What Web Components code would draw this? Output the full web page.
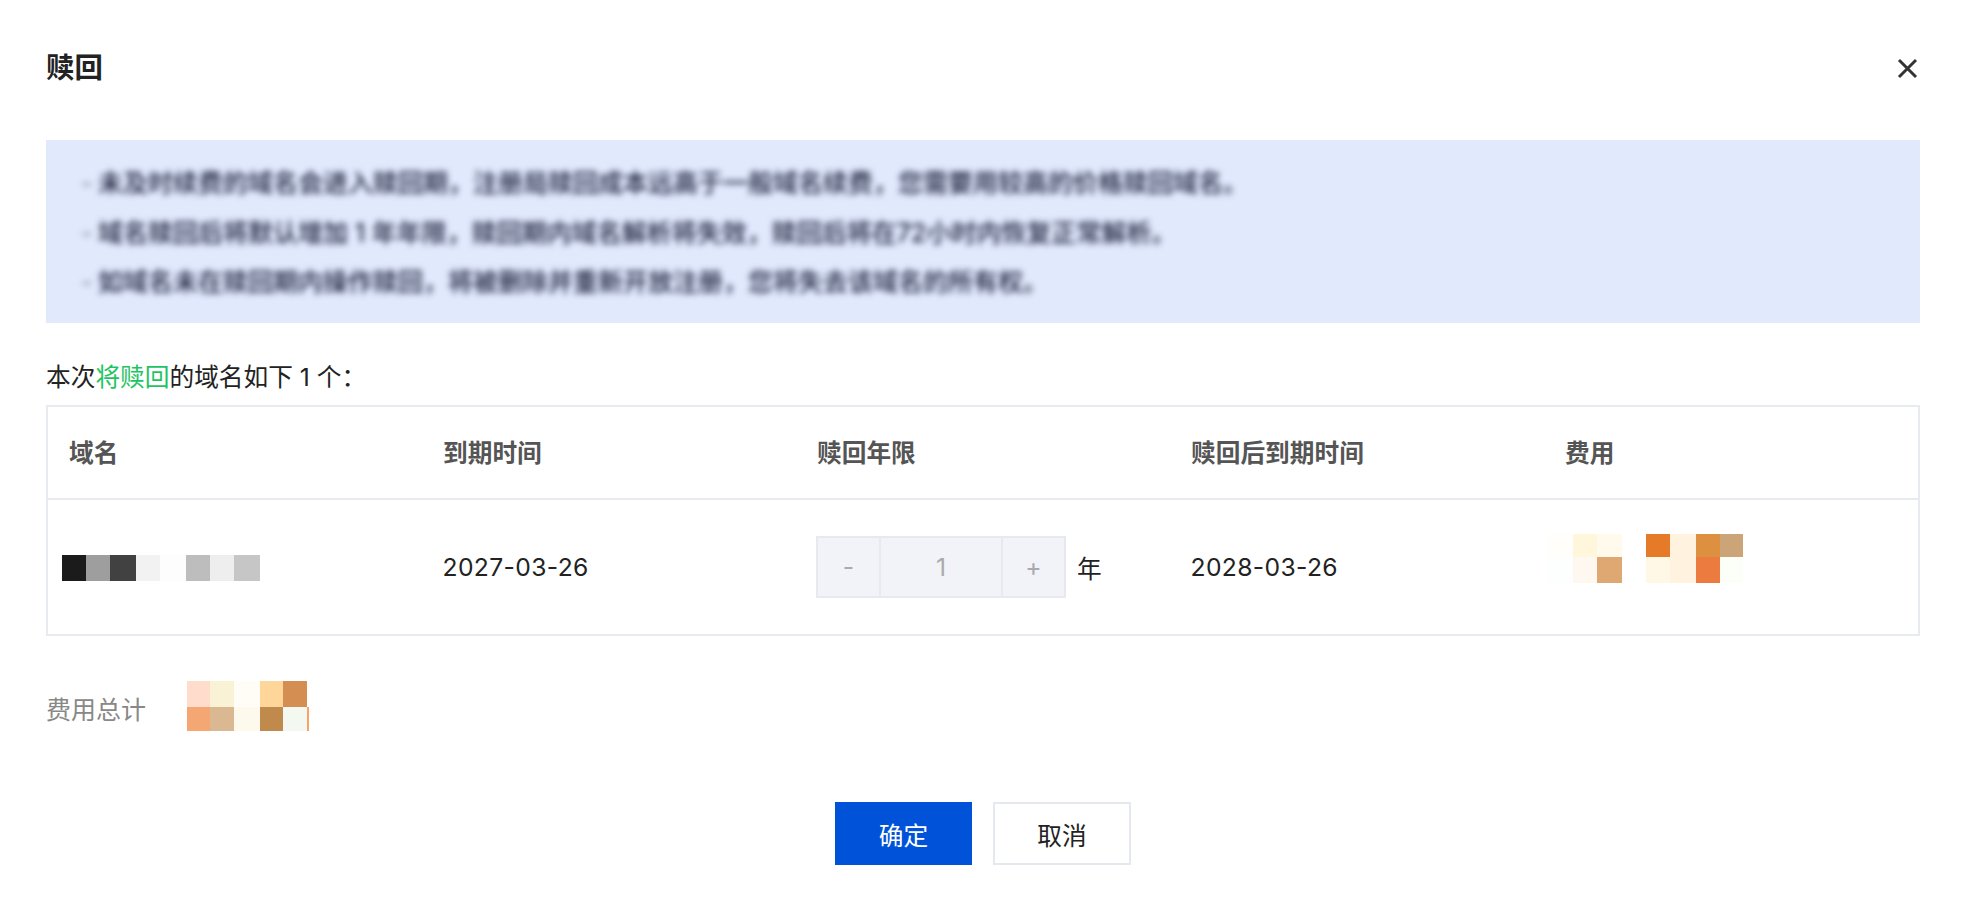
<!DOCTYPE html>
<html lang="zh-CN">
<head>
<meta charset="utf-8">
<title>赎回</title>
<style>
  html, body { margin: 0; background: #fff; }
  body {
    font-family: "Inter", "Noto Sans CJK SC", sans-serif;
    font-size: 24.7px;
    color: #222;
  }
  .green { color: #1fc462; }
  .date { letter-spacing: 0.35px; }
  .colon { font-family: "Noto Sans CJK TC", sans-serif; }
</style>
</head>
<body>
<redeem-dialog heading="赎回">
  <notice-box>
    <li>未及时续费的域名会进入赎回期&#xFF0C;注册局赎回成本远高于一般域名续费&#xFF0C;您需要用较高的价格赎回域名&#x3002;</li>
    <li>域名赎回后将默认增加 1 年年限&#xFF0C;赎回期内域名解析将失效&#xFF0C;赎回后将在72小时内恢复正常解析&#x3002;</li>
    <li>如域名未在赎回期内操作赎回&#xFF0C;将被删除并重新开放注册&#xFF0C;您将失去该域名的所有权&#x3002;</li>
  </notice-box>
  <intro-line>本次<span class="green">将赎回</span>的域名如下 1 个<span class="colon">&#xFF1A;</span></intro-line>
  <domain-table>
    <table-cell head>域名</table-cell>
    <table-cell head>到期时间</table-cell>
    <table-cell head>赎回年限</table-cell>
    <table-cell head>赎回后到期时间</table-cell>
    <table-cell head>费用</table-cell>
    <table-cell kind="name"><pixel-block cols="24,24,26,24,26,24,24,26" rows="26"
      colors="#1b1b1b #9e9e9e #414141 #f2f2f2 #fdfdfd #bdbdbd #eeeeee #c6c6c6"></pixel-block></table-cell>
    <table-cell><span class="date">2027-03-26</span></table-cell>
    <table-cell kind="stepper"><year-stepper value="1"></year-stepper></table-cell>
    <table-cell><span class="date">2028-03-26</span></table-cell>
    <table-cell kind="fee"><pixel-block cols="26,24,25,24,24,26,24,23" rows="23,26"
      colors="#fffefb #fff6dc #fffaeb #ffffff #e57b28 #fff3df #dd9040 #cba577 #fdffff #fff8f0 #dfa872 #ffffff #fff8e7 #fff3e0 #ec7b40 #fcfff7"></pixel-block></table-cell>
  </domain-table>
  <total-line label="费用总计">
    <pixel-block cols="23,24,26,23,24,2" rows="26,24"
      colors="#ffdccb #faf2d5 #fffdf6 #fed699 #d58e52 #ffffff #f4a673 #d9b892 #fef9ed #bf8a4b #f3f8f1 #f9a36a"></pixel-block>
  </total-line>
  <dialog-actions>
    <action-button primary>确定</action-button>
    <action-button>取消</action-button>
  </dialog-actions>
</redeem-dialog>

<script>
class RedeemDialog extends HTMLElement {
  constructor() {
    super();
    this.attachShadow({ mode: "open" });
  }

  connectedCallback() {
    this.shadowRoot.innerHTML = /* html */`
    <style>
      :host { display: block; padding: 0 46px; height: 909px; box-sizing: border-box; }
      header {
        display: flex;
        justify-content: space-between;
        align-items: center;
        height: 140px;
        padding-bottom: 4px;
        box-sizing: border-box;
      }
      h1 { margin: 0; font-size: 28.4px; font-weight: 600; color: #222; line-height: 40px; }
      svg { display: block; margin-right: 2px; }
    </style>
    <header>
      <h1>${this.getAttribute("heading")}</h1>
      <svg width="21" height="21" viewBox="0 0 21 21" fill="none" stroke="#333" stroke-width="3">
        <path d="M2 2l17 17M19 2L2 19"/>
      </svg>
    </header>
    <slot></slot>`;
  }
}

class NoticeBox extends HTMLElement {
  constructor() {
    super();
    this.attachShadow({ mode: "open" });
    this.shadowRoot.innerHTML = /* html */`
    <style>
      :host { display: block; background: #e1e9fd; height: 183px; overflow: hidden; }
      .blur {
        filter: blur(3.4px);
        padding: 19px 0 0 52px;
        color: #1a1f38;
        font-size: 25px;
        font-weight: 500;
        line-height: 49.5px;
      }
      ::slotted(li) { list-style: none; position: relative; white-space: nowrap; }
      ::slotted(li)::before {
        content: "-";
        position: absolute;
        left: -17px;
        color: #8a90a5;
      }
    </style>
    <div class="blur"><slot></slot></div>`;
  }
}

class IntroLine extends HTMLElement {
  constructor() {
    super();
    this.attachShadow({ mode: "open" });
    this.shadowRoot.innerHTML = /* html */`
    <style>
      :host { display: block; height: 82px; padding-top: 34px; box-sizing: border-box; line-height: 36px; }
    </style>
    <slot></slot>`;
  }
}

class DomainTable extends HTMLElement {
  constructor() {
    super();
    this.attachShadow({ mode: "open" });
    this.shadowRoot.innerHTML = /* html */`
    <style>
      :host {
        display: grid;
        grid-template-columns: repeat(5, 1fr);
        grid-template-rows: 93px 134px;
        border: 2px solid #e7eaef;
        height: 231px;
        box-sizing: border-box;
      }
    </style>
    <slot></slot>`;
  }
}

class TableCell extends HTMLElement {
  constructor() {
    super();
    this.attachShadow({ mode: "open" });
    this.shadowRoot.innerHTML = /* html */`
    <style>
      :host {
        display: flex;
        align-items: center;
        padding-left: 20.5px;
        box-sizing: border-box;
        color: #222;
      }
      :host([head]) {
        font-weight: 600;
        color: #555;
        border-bottom: 2px solid #e7eaef;
        padding-left: 21px;
        padding-bottom: 4px;
      }
      :host([kind="name"]) { padding-left: 14px; padding-top: 2px; }
      :host([kind="stepper"]) { padding-left: 20px; }
      :host([kind="fee"]) { padding-left: 3px; padding-bottom: 18px; }
    </style>
    <slot></slot>`;
  }
}

class PixelBlock extends HTMLElement {
  constructor() {
    super();
    this.attachShadow({ mode: "open" });
  }

  connectedCallback() {
    const cols = this.getAttribute("cols").split(",").map((c) => `${c}px`).join(" ");
    const rows = this.getAttribute("rows").split(",").map((r) => `${r}px`).join(" ");
    const cells = this.getAttribute("colors").split(" ")
      .map((c) => `<i style="background:${c}"></i>`).join("");
    this.shadowRoot.innerHTML = /* html */`
    <style>
      :host { display: inline-block; }
      .grid { display: grid; grid-template-columns: ${cols}; grid-template-rows: ${rows}; }
    </style>
    <div class="grid">${cells}</div>`;
  }
}

class YearStepper extends HTMLElement {
  constructor() {
    super();
    this.attachShadow({ mode: "open" });
  }

  connectedCallback() {
    this.shadowRoot.innerHTML = /* html */`
    <style>
      :host { display: flex; align-items: center; gap: 11px; }
      .box {
        display: grid;
        grid-template-columns: 61px 1fr 61px;
        width: 250px;
        height: 62px;
        box-sizing: border-box;
        background: #f2f3f8;
        border: 2px solid #e8e9f0;
        color: #aaa;
      }
      .box span { display: flex; align-items: center; justify-content: center; }
      .mid { border: solid #e8e9f0; border-width: 0 2px; }
      .unit { color: #222; }
    </style>
    <div class="box"><span>-</span><span class="mid">${this.getAttribute("value")}</span><span>+</span></div>
    <span class="unit">年</span>`;
  }
}

class TotalLine extends HTMLElement {
  constructor() {
    super();
    this.attachShadow({ mode: "open" });
  }

  connectedCallback() {
    this.shadowRoot.innerHTML = /* html */`
    <style>
      :host { display: flex; align-items: center; margin-top: 45px; height: 50px; color: #888; }
      span { padding-top: 4px; width: 141px; font-size: 25px; }
    </style>
    <span>${this.getAttribute("label")}</span>
    <slot></slot>`;
  }
}

class DialogActions extends HTMLElement {
  constructor() {
    super();
    this.attachShadow({ mode: "open" });
    this.shadowRoot.innerHTML = /* html */`
    <style>
      :host { display: flex; justify-content: center; gap: 21px; margin-top: 71px; }
    </style>
    <slot></slot>`;
  }
}

class ActionButton extends HTMLElement {
  constructor() {
    super();
    this.attachShadow({ mode: "open" });
    this.shadowRoot.innerHTML = /* html */`
    <style>
      :host {
        display: flex;
        align-items: center;
        justify-content: center;
        width: 138px;
        height: 63px;
        box-sizing: border-box;
        background: #fff;
        border: 2px solid #e6e8f0;
        color: #222;
      }
      :host([primary]) { background: #0052d9; border-color: #0052d9; color: #fff; width: 137px; }
    </style>
    <slot></slot>`;
  }
}

customElements.define("redeem-dialog", RedeemDialog);
customElements.define("notice-box", NoticeBox);
customElements.define("intro-line", IntroLine);
customElements.define("domain-table", DomainTable);
customElements.define("table-cell", TableCell);
customElements.define("pixel-block", PixelBlock);
customElements.define("year-stepper", YearStepper);
customElements.define("total-line", TotalLine);
customElements.define("dialog-actions", DialogActions);
customElements.define("action-button", ActionButton);
</script>
</body>
</html>
